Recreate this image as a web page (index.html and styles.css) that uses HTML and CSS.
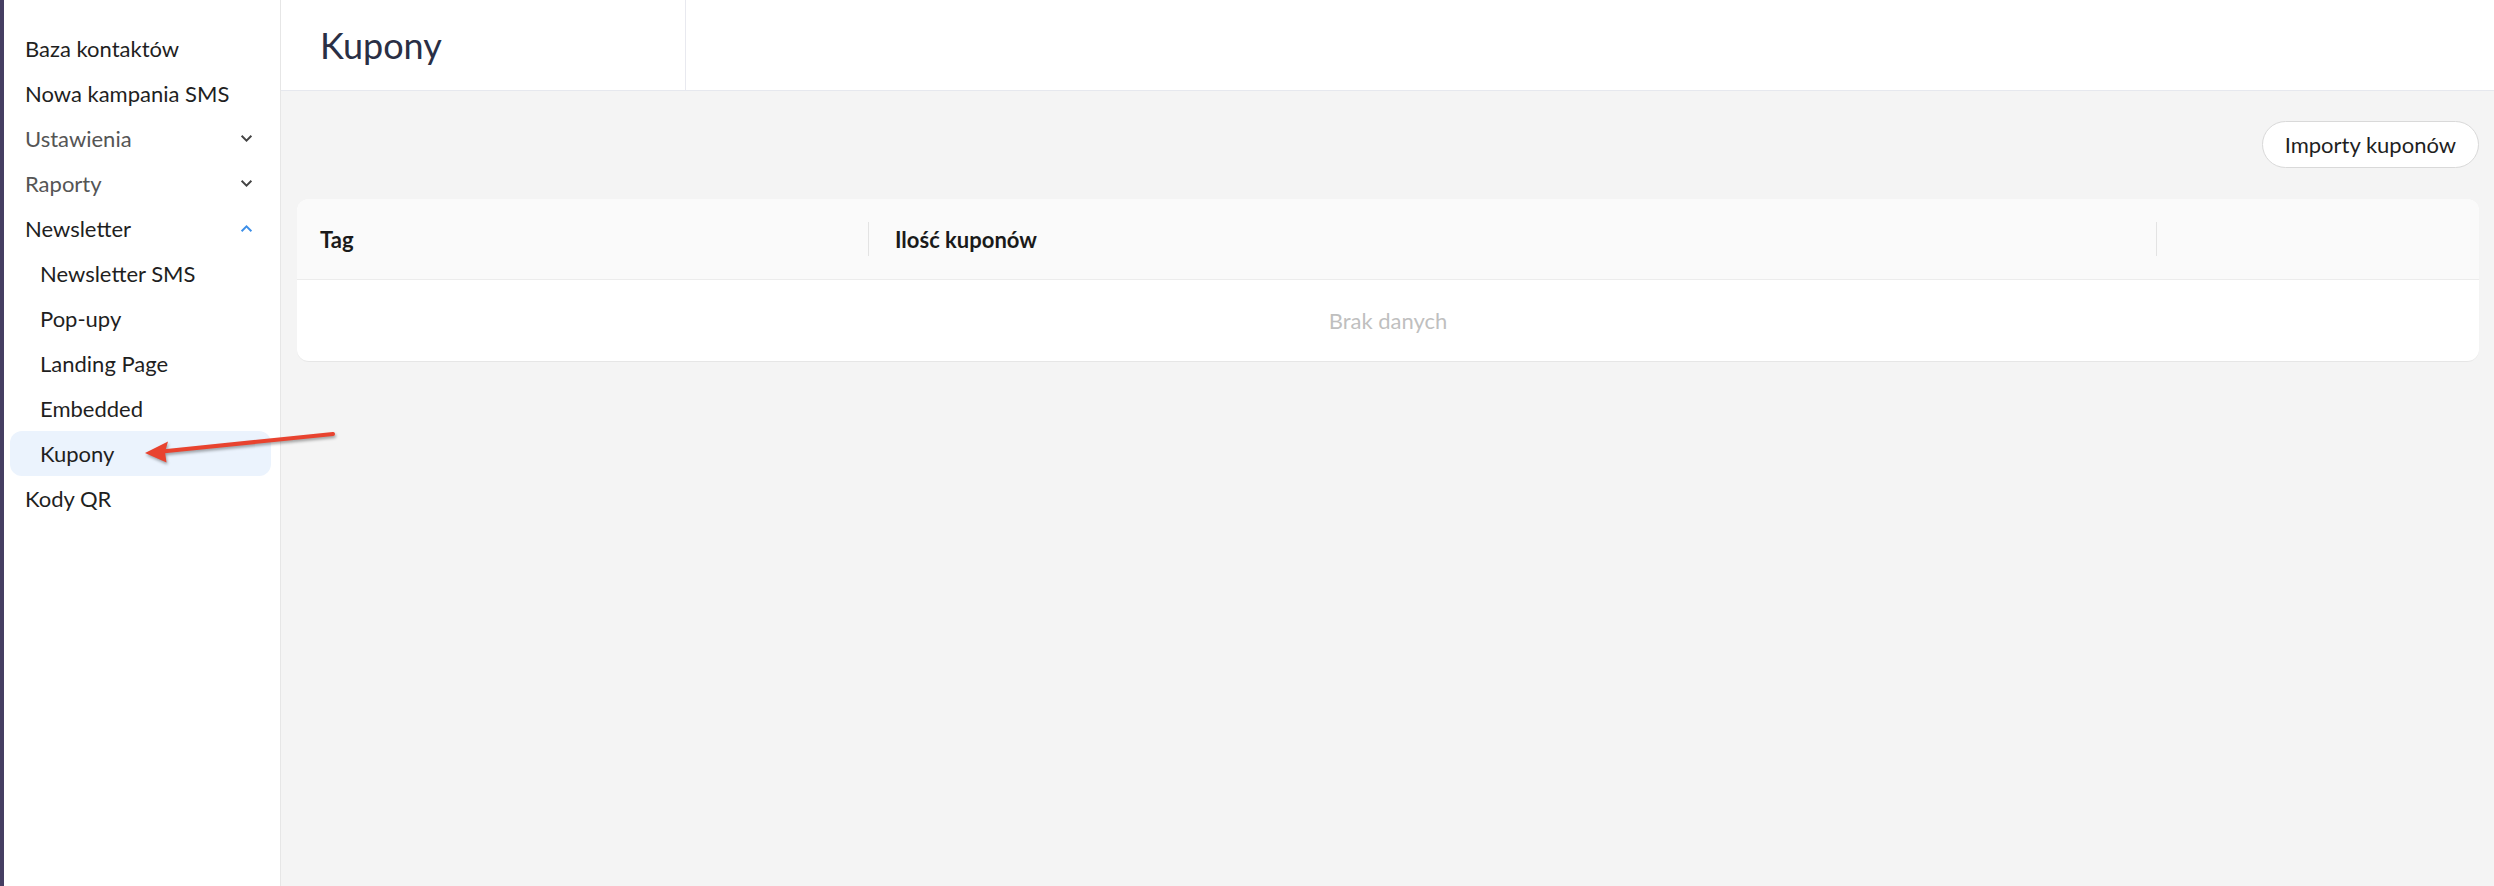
FILE: index.html
```html
<!DOCTYPE html>
<html lang="pl">
<head>
    <meta charset="UTF-8">
    <meta name="viewport" content="width=device-width, initial-scale=1.0">
    <title>Kupony</title>
    <link rel="stylesheet" href="styles.css">
</head>
<body>
    <div class="edge"></div>
    <nav class="sidebar">
        <a class="nav-item">Baza kontaktów</a>
        <a class="nav-item">Nowa kampania SMS</a>
        <a class="nav-item muted">Ustawienia
            <svg class="chev" viewBox="0 0 12 8"><path d="M1.5 1.5 6 6l4.5-4.5"/></svg>
        </a>
        <a class="nav-item muted">Raporty
            <svg class="chev" viewBox="0 0 12 8"><path d="M1.5 1.5 6 6l4.5-4.5"/></svg>
        </a>
        <a class="nav-item">Newsletter
            <svg class="chev open" viewBox="0 0 12 8"><path d="M1.5 6.5 6 2l4.5 4.5"/></svg>
        </a>
        <a class="nav-item sub">Newsletter SMS</a>
        <a class="nav-item sub">Pop-upy</a>
        <a class="nav-item sub">Landing Page</a>
        <a class="nav-item sub">Embedded</a>
        <a class="nav-item sub active">Kupony</a>
        <a class="nav-item">Kody QR</a>
    </nav>

    <main class="main">
        <header class="page-header">
            <div class="title-box">
                <h1>Kupony</h1>
            </div>
        </header>

        <section class="content">
            <div class="toolbar">
                <button class="pill-btn">Importy kuponów</button>
            </div>

            <div class="table-card">
                <div class="table-head">
                    <div class="th">Tag</div>
                    <div class="th split">Ilość kuponów</div>
                    <div class="th split"></div>
                </div>
                <div class="table-empty">Brak danych</div>
            </div>
        </section>
    </main>

    <!-- annotation arrow -->
    <svg class="pointer" viewBox="0 0 200 45" width="200" height="45">
        <line x1="193" y1="9" x2="22" y2="26.5" stroke="#e8432f" stroke-width="4" stroke-linecap="round"/>
        <path d="M5 28 L28 16.5 L25 27 L26.5 37.5 Z" fill="#e8432f"/>
    </svg>
</body>
</html>
```

FILE: styles.css
```css
body {
    margin: 0;
    display: flex;
    height: 100vh;
    font-family: Lato, "Noto Sans", sans-serif;
    color: #1f1f1f;
    background: #f4f4f4;
    overflow: hidden;
}
.edge {
    width: 4px;
    flex-shrink: 0;
    background: #453e62;
}
.sidebar {
    width: 276px;
    flex-shrink: 0;
    background: #fff;
    border-right: 1px solid #e6e6e6;
    padding-top: 26px;
    display: flex;
    flex-direction: column;
}
.nav-item {
    height: 45px;
    margin: 0 9px 0 6px;
    padding: 0 18px 0 15px;
    display: flex;
    align-items: center;
    justify-content: space-between;
    font-size: 22px;
    color: #1f1f1f;
    border-radius: 12px;
    cursor: pointer;
}
.nav-item.muted {
    color: #555;
}
.nav-item.sub {
    padding-left: 30px;
}
.nav-item.active {
    background: #ebf3fd;
}
.chev {
    width: 13px;
    height: 9px;
    fill: none;
    stroke: #444;
    stroke-width: 1.8;
}
.chev.open {
    stroke: #3d8fe8;
}
.main {
    flex: 1;
    display: flex;
    flex-direction: column;
    min-width: 0;
}
.page-header {
    height: 90px;
    background: #fff;
    border-bottom: 1px solid #e6e8ee;
    display: flex;
}
.title-box {
    width: 365px;
    padding-left: 39px;
    border-right: 1px solid #e8e9ef;
    display: flex;
    align-items: center;
}
h1 {
    margin: 0;
    font-size: 36px;
    font-weight: 400;
    color: #2a2f45;
}
.content {
    flex: 1;
    padding: 30px 15px 16px 16px;
}
.toolbar {
    display: flex;
    justify-content: flex-end;
    margin-bottom: 31px;
}
.pill-btn {
    height: 47px;
    padding: 0 22px;
    border: 1px solid #d9d9d9;
    border-radius: 24px;
    background: #fff;
    font-family: inherit;
    font-size: 22px;
    color: #1f1f1f;
    cursor: pointer;
}
.table-card {
    background: #fff;
    border-radius: 12px;
    overflow: hidden;
    border-bottom: 1px solid #e6e6e6;
}
.table-head {
    height: 80px;
    display: grid;
    grid-template-columns: 572px 1288px 1fr;
    background: #fafafa;
    border-bottom: 1px solid #ececec;
}
.th {
    display: flex;
    align-items: center;
    padding-left: 23px;
    font-size: 22px;
    font-weight: 700;
    color: #1a1a1a;
}
.th.split {
    padding-left: 0;
}
.th.split::before {
    content: "";
    width: 1px;
    height: 34px;
    margin-left: -1px;
    margin-right: 26px;
    background: #e3e3e3;
}
.table-empty {
    height: 81px;
    display: flex;
    align-items: center;
    justify-content: center;
    font-size: 22px;
    color: #bfbfbf;
}
.pointer {
    position: absolute;
    left: 140px;
    top: 425px;
    filter: drop-shadow(1px 2px 1.5px rgba(0, 0, 0, 0.35));
}
```
